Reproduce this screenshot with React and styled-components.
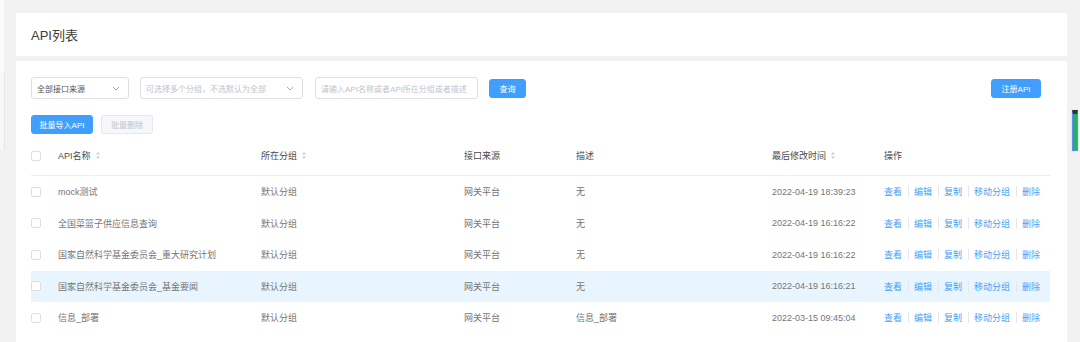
import React from 'react';
import styled, { createGlobalStyle } from 'styled-components';

const GlobalStyle = createGlobalStyle`
  html, body {
    margin: 0;
    padding: 0;
    background: #f2f2f2;
    font-family: "Liberation Sans", "Noto Sans CJK SC", sans-serif;
    overflow: hidden;
  }
`;

const Page = styled.div`
  display: flex;
  width: 1080px;
  height: 342px;
  overflow: hidden;
`;

const Sidebar = styled.div`
  display: flex;
  flex-direction: column;
  width: 5px;
  flex-shrink: 0;
`;

const SideBlock = styled.div`
  height: ${(p) => p.h}px;
  background: ${(p) => p.bg};
  border-right: 1px solid ${(p) => p.line};
`;

const Content = styled.div`
  flex: 1;
  display: flex;
  flex-direction: column;
  gap: 5px;
  padding: 13px 13px 0 11px;
  min-width: 0;
`;

const HeaderCard = styled.div`
  height: 43px;
  background: #fff;
  display: flex;
  align-items: center;
  padding-left: 15px;
  font-size: 13px;
  color: #3c3c3c;
`;

const MainCard = styled.div`
  flex: 1;
  background: #fff;
  padding: 16px 17px 0 15px;
`;

const Toolbar = styled.div`
  display: flex;
  align-items: center;
  height: 22px;
`;

const Field = styled.div`
  box-sizing: border-box;
  width: ${(p) => p.w}px;
  height: 22px;
  margin-right: ${(p) => p.mr}px;
  border: 1px solid #dcdfe6;
  border-radius: 3px;
  display: flex;
  align-items: center;
  justify-content: space-between;
  padding: 0 8px 0 5px;
  font-size: 8px;
  color: ${(p) => (p.placeholder ? '#c0c4cc' : '#555')};
  white-space: nowrap;
`;

const Button = styled.div`
  box-sizing: border-box;
  height: 19px;
  width: ${(p) => p.w}px;
  display: flex;
  align-items: center;
  justify-content: center;
  border-radius: 3px;
  font-size: 8px;
  background: ${(p) => (p.disabled ? '#f5f7fa' : '#409eff')};
  color: ${(p) => (p.disabled ? '#c0c4cc' : '#fff')};
  border: 1px solid ${(p) => (p.disabled ? '#e4e7ed' : '#409eff')};
  margin-left: ${(p) => p.ml || 0}px;
  margin-right: ${(p) => p.mr || 0}px;
`;

const ActionBar = styled.div`
  display: flex;
  gap: 8px;
  margin-top: 16px;
`;

const Table = styled.div`
  margin-top: 2px;
  width: 1019px;
`;

const Row = styled.div`
  display: grid;
  grid-template-columns: 27px 203px 203px 112px 196px 112px 1fr;
  align-items: center;
  height: ${(p) => (p.head ? '40px' : '31.5px')};
  box-sizing: border-box;
  border-bottom: ${(p) => (p.head ? '1px solid #ebeef5' : 'none')};
  background: ${(p) => (p.active ? '#e9f5fe' : 'transparent')};
  font-size: 9px;
  color: ${(p) => (p.head ? '#4a4a4a' : '#757575')};
`;

const Cell = styled.div`
  display: flex;
  align-items: center;
  gap: 5px;
  white-space: nowrap;
`;

const Checkbox = styled.span`
  display: block;
  box-sizing: border-box;
  width: 10px;
  height: 10px;
  border: 1px solid #dcdfe6;
  border-radius: 2px;
  background: #fff;
`;

const Link = styled.span`
  color: #4a9ff5;
`;

const Sep = styled.span`
  width: 1px;
  height: 11px;
  background: #e4e7ed;
  margin: 0 5.5px;
`;

const Actions = styled.div`
  display: flex;
  align-items: center;
  white-space: nowrap;
`;

const Scroll = styled.div`
  position: fixed;
  top: 110px;
  right: 2px;
  width: 4px;
  height: 36px;
  border: 1px solid #5f8cf0;
  border-top: 4px solid #2e3440;
  border-radius: 1px;
  background: #22b35e;
  box-shadow: 0 0 1px #8b6cf0;
`;

const Chevron = () => (
  <svg width="8" height="5" viewBox="0 0 8 5" fill="none">
    <path d="M1 1l3 3 3-3" stroke="#a8abb2" strokeWidth="1" />
  </svg>
);

const Sort = () => (
  <svg width="4" height="7" viewBox="0 0 4 7">
    <path d="M2 0L4 2.5H0z M2 7L0 4.5h4z" fill="#c8cbd1" />
  </svg>
);

const rows = [
  ['mock测试', '2022-04-19 18:39:23', '无'],
  ['全国菜篮子供应信息查询', '2022-04-19 16:16:22', '无'],
  ['国家自然科学基金委员会_重大研究计划', '2022-04-19 16:16:22', '无'],
  ['国家自然科学基金委员会_基金要闻', '2022-04-19 16:16:21', '无', true],
  ['信息_部署', '2022-03-15 09:45:04', '信息_部署'],
];

const ops = ['查看', '编辑', '复制', '移动分组', '删除'];

export default function App() {
  return (
    <Page>
      <GlobalStyle />
      <Sidebar>
        <SideBlock h={72} bg="#fbfbfb" line="#f0f0f0" />
        <SideBlock h={78} bg="#f7f7f7" line="#e6e6e6" />
      </Sidebar>
      <Content>
        <HeaderCard>API列表</HeaderCard>
        <MainCard>
          <Toolbar>
            <Field w={98} mr={11}>
              全部接口来源
              <Chevron />
            </Field>
            <Field w={163} mr={12} placeholder>
              可选择多个分组，不选默认为全部
              <Chevron />
            </Field>
            <Field w={163} mr={11} placeholder>
              请输入API名称或者API所在分组或者描述
            </Field>
            <Button w={37}>查询</Button>
            <Button w={50} ml={465} mr={9}>
              注册API
            </Button>
          </Toolbar>
          <ActionBar>
            <Button w={62}>批量导入API</Button>
            <Button w={52} disabled>
              批量删除
            </Button>
          </ActionBar>
          <Table>
            <Row head>
              <Cell>
                <Checkbox />
              </Cell>
              <Cell>
                API名称 <Sort />
              </Cell>
              <Cell>
                所在分组 <Sort />
              </Cell>
              <Cell>接口来源</Cell>
              <Cell>描述</Cell>
              <Cell>
                最后修改时间 <Sort />
              </Cell>
              <Cell>操作</Cell>
            </Row>
            {rows.map(([name, time, desc, active]) => (
              <Row key={name} active={active}>
                <Cell>
                  <Checkbox />
                </Cell>
                <Cell>{name}</Cell>
                <Cell>默认分组</Cell>
                <Cell>网关平台</Cell>
                <Cell>{desc}</Cell>
                <Cell>{time}</Cell>
                <Actions>
                  {ops.map((op, i) => (
                    <React.Fragment key={op}>
                      {i > 0 && <Sep />}
                      <Link>{op}</Link>
                    </React.Fragment>
                  ))}
                </Actions>
              </Row>
            ))}
          </Table>
        </MainCard>
      </Content>
      <Scroll />
    </Page>
  );
}
